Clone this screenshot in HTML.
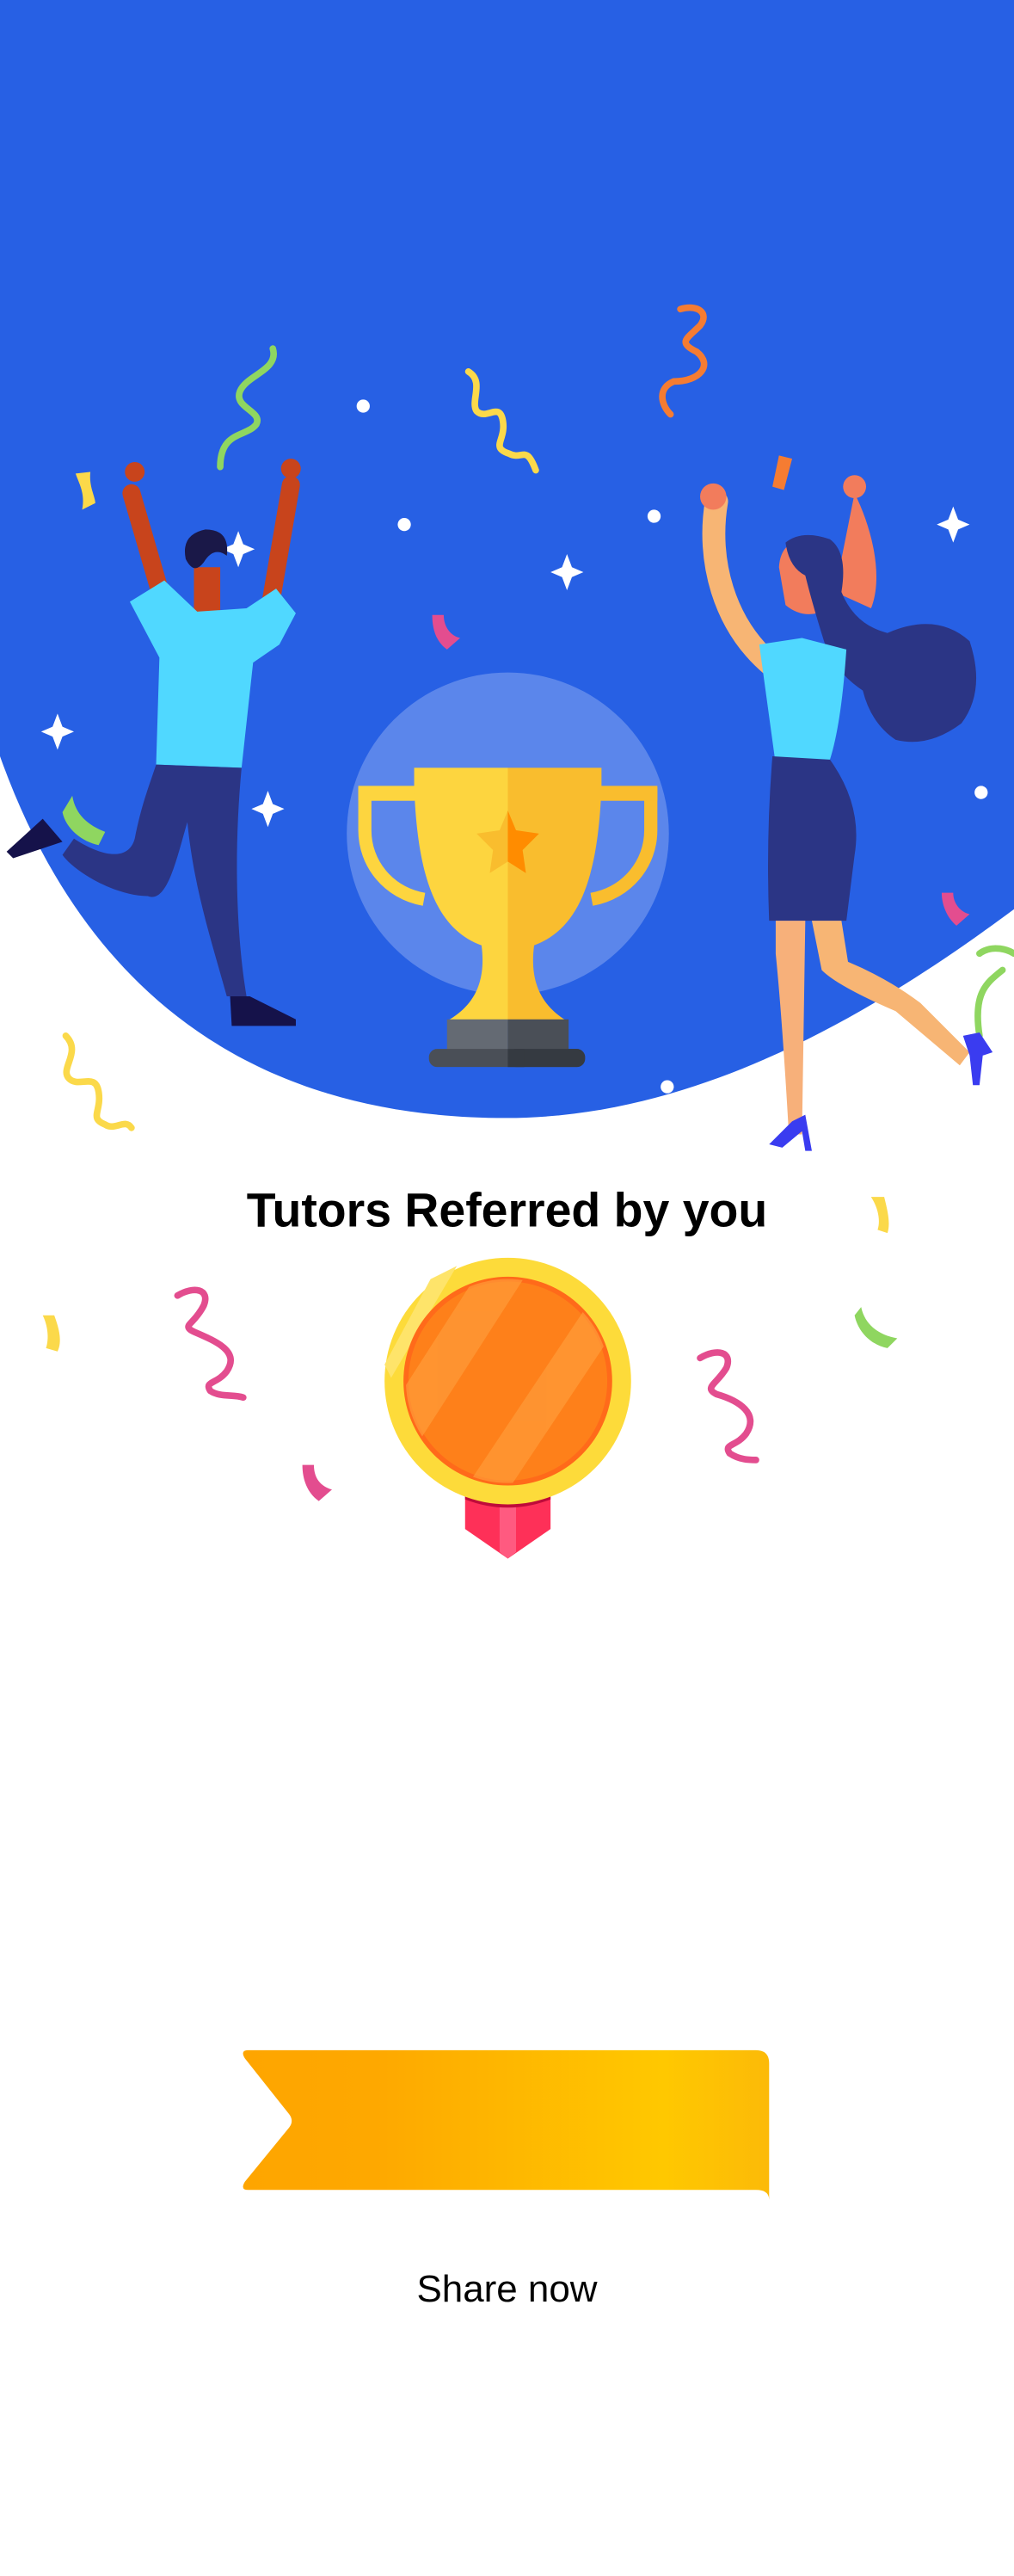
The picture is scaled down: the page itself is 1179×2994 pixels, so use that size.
<!DOCTYPE html>
<html><head><meta charset="utf-8"><style>
html,body{margin:0;padding:0;background:#fff;width:1179px;height:2994px;overflow:hidden}
svg{display:block}
</style></head><body>
<svg width="1179" height="2994" viewBox="0 0 617 1566.8" xmlns="http://www.w3.org/2000/svg">
<defs>
<linearGradient id="bg" x1="0" x2="1" y1="0" y2="0">
<stop offset="0" stop-color="#fea500"/><stop offset="0.25" stop-color="#fea800"/><stop offset="0.8" stop-color="#ffc800"/><stop offset="1" stop-color="#fcba08"/>
</linearGradient>
<clipPath id="lh"><rect x="0" y="0" width="309" height="1566"/></clipPath>
<clipPath id="rh"><rect x="309" y="0" width="309" height="1566"/></clipPath>
<clipPath id="medin"><circle cx="309" cy="840" r="62"/></clipPath>
</defs>
<path d="M0 0H617V553C540 610 430 680 308 680C150 680 50 600 0 460Z" fill="#2760e4"/>
<circle cx="309" cy="507" r="98" fill="#5b86eb"/>

<!-- confetti -->
<g fill="none" stroke-linecap="round" stroke-width="4">
<path d="M166 212C170 225 150 228 146 238C142 248 160 250 156 258C150 266 134 262 134 284" stroke="#8fd660"/>
<path d="M285 226C295 232 286 244 290 250C296 256 304 244 306 256C308 268 298 272 310 276C318 280 320 270 326 286" stroke="#fbd94a"/>
<path d="M414 188C424 185 432 190 426 198C418 206 412 208 424 214C434 222 426 232 410 232C400 236 402 246 408 252" stroke="#f57c32"/>
<path d="M40 630C50 640 36 650 42 656C48 662 58 652 60 664C62 676 54 680 64 684C70 688 76 680 80 686" stroke="#fbd94a"/>
<path d="M596 580C604 574 614 578 617 580M610 590C600 598 592 604 596 630" stroke="#8fd660"/>
<path d="M108 788C118 782 128 784 124 794C118 806 110 806 118 810C132 816 146 822 138 834C132 842 124 840 128 846C134 850 142 848 148 850" stroke="#e34d8f"/>
<path d="M426 826C436 820 446 822 442 832C436 842 428 844 436 848C450 852 462 860 454 872C448 880 440 878 444 884C450 888 456 888 460 888" stroke="#e34d8f"/>
</g>
<g>
<path d="M46 288L55 287C54 296 58 302 58 306L50 310C52 300 48 294 46 288Z" fill="#fbd94a"/>
<path d="M263 374L270 374C270 382 275 387 280 388L272 395C265 390 263 382 263 374Z" fill="#e34d8f"/>
<path d="M474 277L482 279L477 298L470 296Z" fill="#f57c32"/>
<path d="M573 543L580 543C580 550 585 555 590 556L582 563C576 558 573 550 573 543Z" fill="#e34d8f"/>
<path d="M44 484C46 496 54 502 64 506L60 514C50 512 40 504 38 494Z" fill="#8fd660"/>
<path d="M530 728L538 728C540 736 542 744 540 750L534 748C536 742 534 734 530 728Z" fill="#fbd94a"/>
<path d="M524 795C526 805 534 812 546 814L540 820C530 818 522 810 520 800Z" fill="#8fd660"/>
<path d="M26 800L33 800C36 808 38 816 35 822L28 820C30 814 29 806 26 800Z" fill="#fbd94a"/>
<path d="M184 891L191 891C191 899 195 904 202 906L194 913C187 908 184 900 184 891Z" fill="#e34d8f"/>
</g>
<g fill="#fff">
<circle cx="221" cy="247" r="4"/><circle cx="246" cy="319" r="4"/><circle cx="398" cy="314" r="4"/><circle cx="597" cy="482" r="4"/><circle cx="406" cy="661" r="4"/>
<path d="M145 323L148 331L155 334L148 337L145 345L142 337L135 334L142 331Z"/>
<path d="M345 337L348 345L355 348L348 351L345 359L342 351L335 348L342 345Z"/>
<path d="M580 308L583 316L590 319L583 322L580 330L577 322L570 319L577 316Z"/>
<path d="M35 434L38 442L45 445L38 448L35 456L32 448L25 445L32 442Z"/>
<path d="M163 481L166 489L173 492L166 495L163 503L160 495L153 492L160 489Z"/>
</g>

<!-- trophy -->
<g>
<g clip-path="url(#lh)" fill="none" stroke="#fdd53f" stroke-width="8"><path d="M252 483H222V505C222 525 236 543 258 547"/></g>
<g clip-path="url(#rh)" fill="none" stroke="#f9bd2e" stroke-width="8"><path d="M366 483H396V505C396 525 382 543 360 547"/></g>
<path d="M218 478H258V487H218Z" fill="#fdd53f"/><path d="M360 478H400V487H360Z" fill="#f9bd2e"/>
<g clip-path="url(#lh)"><path d="M252 467H366V478C364 535 352 565 325 575C322 598 330 612 345 621H272C288 612 296 598 293 575C266 565 254 535 252 478Z" fill="#fdd53f"/></g>
<g clip-path="url(#rh)"><path d="M252 467H366V478C364 535 352 565 325 575C322 598 330 612 345 621H272C288 612 296 598 293 575C266 565 254 535 252 478Z" fill="#f9bd2e"/></g>
<path d="M309 493L314 505L328 507L318 517L320 531L309 524L298 531L300 517L290 507L304 505Z" fill="#f9bd2e"/>
<g clip-path="url(#rh)"><path d="M309 493L314 505L328 507L318 517L320 531L309 524L298 531L300 517L290 507L304 505Z" fill="#ff8c00"/></g>
<rect x="272" y="620" width="37" height="20" fill="#646a73"/><rect x="309" y="620" width="37" height="20" fill="#4a4f57"/>
<rect x="261" y="638" width="95" height="11" rx="5" fill="#4a4f57"/><rect x="309" y="638" width="47" height="11" rx="5" fill="#353a41"/><rect x="309" y="638" width="10" height="11" fill="#353a41"/>
</g>

<!-- man -->
<g>
<path d="M98 362L80 300M165 365L177 295" stroke="#c8441c" stroke-width="11" stroke-linecap="round" fill="none"/>
<circle cx="82" cy="287" r="6" fill="#c8441c"/><circle cx="177" cy="285" r="6" fill="#c8441c"/>
<path d="M118 345H134V378Q126 382 118 378Z" fill="#c8441c"/>
<path d="M113 340Q110 325 125 322Q140 322 138 338Q130 332 124 342Q118 350 113 340Z" fill="#1a1848"/>
<path d="M79 366L100 353L120 372L150 370L168 358L180 373L170 392L154 403L147 467L95 465L97 400Z" fill="#50d8ff"/>
<path d="M95 465L147 467C142 520 144 570 150 606L138 606C128 570 118 540 114 500C108 520 102 550 90 545C70 545 45 530 38 520L45 510C60 520 78 525 82 510C86 490 90 480 95 465Z" fill="#2b3585"/>
<path d="M140 606H152L180 620V624H141Z" fill="#15124a"/>
<path d="M4 518L26 498L38 512L8 522Z" fill="#15124a"/>
</g>

<!-- woman -->
<g>
<path d="M520 300C530 320 538 350 530 370L508 360Z" fill="#f27c5c"/>
<circle cx="520" cy="296" r="7" fill="#f27c5c"/>
<path d="M436 305C430 340 440 380 470 405" stroke="#f7b574" stroke-width="14" fill="none" stroke-linecap="round"/>
<circle cx="434" cy="302" r="8" fill="#f27c5c"/>
<path d="M474 345Q475 328 492 328Q508 330 510 348L505 370Q490 378 478 368Z" fill="#f27c5c"/>
<path d="M478 330Q488 322 505 328Q516 336 512 360Q520 380 540 385Q570 372 590 390Q600 420 585 440Q565 455 545 450Q530 440 525 420Q510 410 503 395Q495 370 490 350Q480 345 478 330Z" fill="#2b3585"/>
<path d="M462 392L488 388L515 395Q512 440 505 462L472 465Z" fill="#50d8ff"/>
<path d="M470 460L505 462Q525 490 520 520L515 560H468Q466 510 470 460Z" fill="#2b3585"/>
<path d="M472 560H490L488 690H480Q476 620 472 580Z" fill="#f7b07a"/>
<path d="M494 560H512L516 585Q540 595 560 610L590 640L584 648L545 615Q510 600 500 590Z" fill="#f7b574"/>
<path d="M468 696L482 682L490 678L494 700H490L488 688L476 698Z" fill="#3a3cf0"/>
<path d="M586 630L596 628L604 640L598 642L596 660L592 660L590 642Z" fill="#3a3cf0"/>
</g>

<!-- title -->
<text x="308.5" y="746" text-anchor="middle" font-family="Liberation Sans, Arial, sans-serif" font-weight="bold" font-size="29" fill="#000">Tutors Referred by you</text>

<!-- medal -->
<path d="M283 900H335V930L309 948L283 930Z" fill="#fe3058"/>
<path d="M304 914H314V944L309 948L304 944Z" fill="#ff5a80"/>
<path d="M283 905Q309 918 335 905V912Q309 922 283 912Z" fill="#bf0b3a"/>
<circle cx="309" cy="840" r="75" fill="#fddb3a"/>
<path d="M262 778L278 770L238 838L234 830Z" fill="#fee46a"/>
<circle cx="309" cy="840" r="62" fill="#fe801a" stroke="#ff6a1a" stroke-width="3"/>
<g clip-path="url(#medin)" fill="#ff9c3a" opacity="0.7">
<path d="M300 760L330 760L240 900L210 900Z"/><path d="M360 790L380 800L300 920L280 910Z"/>
</g>

<!-- banner -->
<path d="M151 1247H460Q468 1247 468 1255V1338Q468 1332 460 1332H151Q146 1332 149 1327L176 1294Q179 1290 176 1286L149 1252Q146 1247 151 1247Z" fill="url(#bg)"/>

<text x="308.5" y="1400" text-anchor="middle" font-family="Liberation Sans, Arial, sans-serif" font-size="23" fill="#000">Share now</text>
</svg>
</body></html>
